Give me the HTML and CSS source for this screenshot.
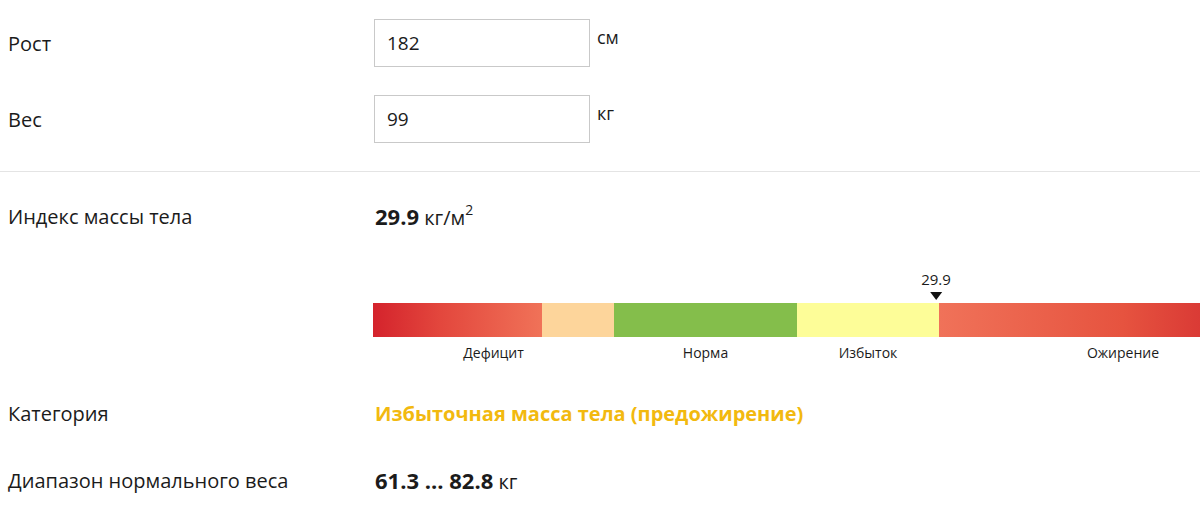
FILE: index.html
```html
<!DOCTYPE html>
<html lang="ru">
<head>
    <meta charset="UTF-8">
    <title>Индекс массы тела</title>
    <link rel="stylesheet" href="styles.css">
</head>
<body>
    <!-- ввод данных -->
    <div class="inputs">
        <div class="field-row">
            <label class="label" for="height">Рост</label>
            <input class="field" id="height" type="text" value="182">
            <span class="unit">см</span>
        </div>
        <div class="field-row">
            <label class="label" for="weight">Вес</label>
            <input class="field" id="weight" type="text" value="99">
            <span class="unit">кг</span>
        </div>
    </div>

    <hr class="divider">

    <!-- результат -->
    <div class="result-row bmi-row">
        <div class="label">Индекс массы тела</div>
        <div class="value"><b>29.9</b> кг/м<sup>2</sup></div>
    </div>

    <div class="scale-row">
        <div class="scale">
            <div class="marker" style="left: 563px">
                <span class="marker-value">29.9</span>
                <span class="marker-arrow"></span>
            </div>
            <div class="zone">
                <div class="zone-bar">
                    <span class="seg seg-deficit"></span>
                    <span class="seg seg-low"></span>
                </div>
                <div class="zone-name">Дефицит</div>
            </div>
            <div class="zone zone-norm">
                <div class="zone-bar"><span class="seg seg-norm"></span></div>
                <div class="zone-name">Норма</div>
            </div>
            <div class="zone zone-over">
                <div class="zone-bar"><span class="seg seg-over"></span></div>
                <div class="zone-name">Избыток</div>
            </div>
            <div class="zone zone-obese">
                <div class="zone-bar"><span class="seg seg-obese"></span></div>
                <div class="zone-name">Ожирение</div>
            </div>
        </div>
    </div>

    <div class="result-row category-row">
        <div class="label">Категория</div>
        <div class="value category">Избыточная масса тела (предожирение)</div>
    </div>

    <div class="result-row range-row">
        <div class="label">Диапазон нормального веса</div>
        <div class="value"><b>61.3 ... 82.8</b> кг</div>
    </div>
</body>
</html>
```

FILE: styles.css
```css
* {
    margin: 0;
    padding: 0;
    box-sizing: border-box;
}

:root {
    --text-color: #1b1b1b;
    --border-color: #c9c9c9;
    --line-color: #e4e4e4;
    --accent-yellow: #f2b90f;
}

body {
    background: #ffffff;
    color: var(--text-color);
    font-family: 'Open Sans', 'Noto Sans', sans-serif;
    font-size: 20px;
    overflow: hidden;
}

/* Поля ввода */
.inputs {
    padding: 19px 0 0 8px;
}

.field-row {
    display: grid;
    grid-template-columns: 366px 216px auto;
    height: 48px;
    margin-bottom: 28px;
}

.field-row .label {
    align-self: center;
}

.field {
    width: 216px;
    height: 48px;
    border: 1px solid var(--border-color);
    padding: 0 12px;
    font-family: inherit;
    font-size: 19px;
    color: var(--text-color);
    outline: none;
}

.unit {
    padding: 6px 0 0 7px;
    font-size: 18px;
}

.divider {
    border: none;
    border-top: 1px solid var(--line-color);
}

/* Результаты */
.result-row {
    display: grid;
    grid-template-columns: 367px 1fr;
    align-items: center;
    padding-left: 8px;
    line-height: 24px;
}

.bmi-row {
    padding-top: 32px;
}

.value b {
    font-size: 22px;
}

.value sup {
    font-size: 14px;
    line-height: 0;
    vertical-align: 10px;
}

.category {
    color: var(--accent-yellow);
    font-weight: 700;
}

.category-row {
    padding-top: 40px;
}

.range-row {
    padding-top: 42px;
}

/* Шкала */
.scale-row {
    padding: 34px 0 0 373px;
}

.scale {
    position: relative;
    display: flex;
    padding-top: 39px;
    width: 934px;
}

.marker {
    position: absolute;
    top: 5px;
    transform: translateX(-50%);
    display: flex;
    flex-direction: column;
    align-items: center;
}

.marker-value {
    font-size: 15px;
    line-height: 20px;
}

.marker-arrow {
    margin-top: 3px;
    width: 0;
    height: 0;
    border-left: 6px solid transparent;
    border-right: 6px solid transparent;
    border-top: 8px solid #111111;
}

.zone {
    width: 241px;
    display: flex;
    flex-direction: column;
}

.zone-norm { width: 183px; }
.zone-over { width: 142px; }
.zone-obese { width: 368px; }

.zone-bar {
    display: flex;
    height: 34px;
}

.seg {
    height: 100%;
    flex: 1;
}

.seg-deficit {
    flex: 0 0 169px;
    background: linear-gradient(to right, #d4232c, #e3473d 40%, #f07258);
}

.seg-low { background: #fdd59b; }
.seg-norm { background: #84be4b; }
.seg-over { background: #fdfd98; }

.seg-obese {
    background: linear-gradient(to right, #f07259, #e6533f 50%, #d22a2f 85%, #c41f28);
}

.zone-name {
    text-align: center;
    font-size: 14px;
    line-height: 18px;
    padding-top: 7px;
}
```
